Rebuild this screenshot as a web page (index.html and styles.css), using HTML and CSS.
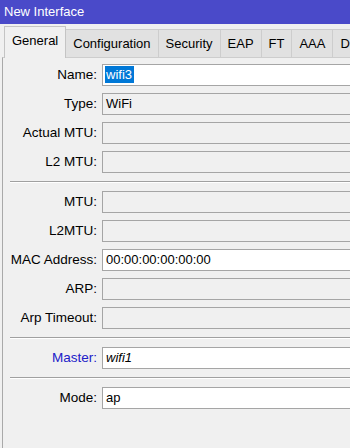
FILE: index.html
```html
<!DOCTYPE html>
<html lang="en">
<head>
    <meta charset="UTF-8">
    <title>New Interface</title>
<link rel="stylesheet" href="styles.css">
</head>
<body>
<div class="window">
    <div class="title_bar">New Interface</div>

    <div class="tab_strip">
        <span class="tab tab_selected">General</span>
        <span class="tab">Configuration</span>
        <span class="tab">Security</span>
        <span class="tab">EAP</span>
        <span class="tab">FT</span>
        <span class="tab">AAA</span>
        <span class="tab">Datapath</span>
    </div>

    <div class="tab_panel">
        <div class="field_group">
            <div class="field_row">
                <span class="field_label">Name:</span>
                <div class="field_box field_edit"><span class="selected_text">wifi3</span></div>
            </div>
            <div class="field_row">
                <span class="field_label">Type:</span>
                <div class="field_box">WiFi</div>
            </div>
            <div class="field_row">
                <span class="field_label">Actual MTU:</span>
                <div class="field_box"></div>
            </div>
            <div class="field_row">
                <span class="field_label">L2 MTU:</span>
                <div class="field_box"></div>
            </div>
        </div>

        <div class="separator"></div>

        <div class="field_group">
            <div class="field_row">
                <span class="field_label">MTU:</span>
                <div class="field_box"></div>
            </div>
            <div class="field_row">
                <span class="field_label">L2MTU:</span>
                <div class="field_box"></div>
            </div>
            <div class="field_row">
                <span class="field_label">MAC Address:</span>
                <div class="field_box field_edit">00:00:00:00:00:00</div>
            </div>
            <div class="field_row">
                <span class="field_label">ARP:</span>
                <div class="field_box"></div>
            </div>
            <div class="field_row">
                <span class="field_label">Arp Timeout:</span>
                <div class="field_box"></div>
            </div>
        </div>

        <div class="separator"></div>

        <div class="field_row">
            <span class="field_label label_link">Master:</span>
            <div class="field_box field_edit value_italic">wifi1</div>
        </div>

        <div class="separator"></div>

        <div class="field_row">
            <span class="field_label">Mode:</span>
            <div class="field_box field_edit">ap</div>
        </div>
    </div>
</div>
</body>
</html>
```

FILE: styles.css
```css
body{
    margin: 0;
    width: 350px;
    height: 448px;
    overflow: hidden;
    background-color: #f0f0f0;
    font-family: "Liberation Sans", Arial, sans-serif;
    font-size: 13px;
    color: #000000;
}

.window{
    width: 430px;
}

.title_bar{
    height: 24px;
    line-height: 24px;
    padding-left: 4px;
    background-color: #4a4ac9;
    color: #ffffff;
}

.tab_strip{
    display: flex;
    align-items: flex-end;
    height: 31px;
    margin-top: 2px;
    padding-left: 4px;
    white-space: nowrap;
}

.tab{
    box-sizing: border-box;
    height: 28px;
    line-height: 27px;
    padding: 0 7px;
    margin-left: -1px;
    background-color: #e1e1e1;
    border: 1px solid #cdcdcd;
    border-bottom: none;
}

.tab_selected{
    position: relative;
    z-index: 1;
    height: 32px;
    line-height: 28px;
    margin-left: 0;
    margin-bottom: -1px;
    background-color: #f0f0f0;
    border-color: #c4c4c4;
}

.tab_panel{
    box-sizing: border-box;
    height: 391px;
    margin-left: 2px;
    padding-top: 6px;
    border-top: 1px solid #cdcdcd;
    border-left: 1px solid #a9a9a9;
}

.field_group{
    display: flex;
    flex-direction: column;
    gap: 7px;
}

.field_row{
    display: flex;
    align-items: center;
    height: 22px;
}

.field_label{
    width: 94px;
    margin-right: 5px;
    text-align: right;
    font-size: 13.5px;
    line-height: 22px;
    white-space: nowrap;
}

.label_link{
    color: #2020c8;
}

.field_box{
    box-sizing: border-box;
    flex: 1;
    height: 22px;
    line-height: 20px;
    padding-left: 3px;
    border: 1px solid #a5a5a5;
    background-color: #f0f0f0;
}

.field_edit{
    background-color: #ffffff;
}

.value_italic{
    font-style: italic;
}

.selected_text{
    display: inline-block;
    line-height: 17px;
    margin-left: -1px;
    padding: 0 2px 0 1px;
    background-color: #0078d7;
    color: #ffffff;
}

.separator{
    margin: 8px 0 8px 7px;
    border-top: 1px solid #a0a0a0;
    border-bottom: 1px solid #ffffff;
}
```
